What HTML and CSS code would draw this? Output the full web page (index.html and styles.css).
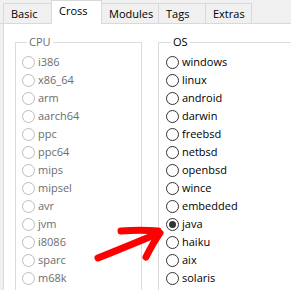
FILE: index.html
```html
<!DOCTYPE html>
<html>
<head>
<meta charset="utf-8">
<link rel="stylesheet" href="styles.css">
</head>
<body>
<div class="tabs">
  <div class="tab t-basic">Basic</div>
  <div class="tab t-cross active">Cross</div>
  <div class="tab t-modules">Modules</div>
  <div class="tab t-tags">Tags</div>
  <div class="tab t-extras">Extras</div>
</div>
<div class="panel">
  <fieldset class="group cpu disabled">
    <legend>CPU</legend>
    <div class="options">
      <div class="opt"><span class="radio"></span><span>i386</span></div>
      <div class="opt"><span class="radio"></span><span>x86_64</span></div>
      <div class="opt"><span class="radio"></span><span>arm</span></div>
      <div class="opt"><span class="radio"></span><span>aarch64</span></div>
      <div class="opt"><span class="radio"></span><span>ppc</span></div>
      <div class="opt"><span class="radio"></span><span>ppc64</span></div>
      <div class="opt"><span class="radio"></span><span>mips</span></div>
      <div class="opt"><span class="radio"></span><span>mipsel</span></div>
      <div class="opt"><span class="radio"></span><span>avr</span></div>
      <div class="opt"><span class="radio"></span><span>jvm</span></div>
      <div class="opt"><span class="radio"></span><span>i8086</span></div>
      <div class="opt"><span class="radio"></span><span>sparc</span></div>
      <div class="opt"><span class="radio"></span><span>m68k</span></div>
    </div>
  </fieldset>
  <fieldset class="group os">
    <legend>OS</legend>
    <div class="options">
      <div class="opt"><span class="radio"></span><span>windows</span></div>
      <div class="opt"><span class="radio"></span><span>linux</span></div>
      <div class="opt"><span class="radio"></span><span>android</span></div>
      <div class="opt"><span class="radio"></span><span>darwin</span></div>
      <div class="opt"><span class="radio"></span><span>freebsd</span></div>
      <div class="opt"><span class="radio"></span><span>netbsd</span></div>
      <div class="opt"><span class="radio"></span><span>openbsd</span></div>
      <div class="opt"><span class="radio"></span><span>wince</span></div>
      <div class="opt"><span class="radio"></span><span>embedded</span></div>
      <div class="opt"><span class="radio checked"></span><span>java</span></div>
      <div class="opt"><span class="radio"></span><span>haiku</span></div>
      <div class="opt"><span class="radio"></span><span>aix</span></div>
      <div class="opt"><span class="radio"></span><span>solaris</span></div>
    </div>
  </fieldset>
</div>
<svg class="arrow" width="291" height="290" viewBox="0 0 291 290">
  <g fill="none" stroke="#ff0000" stroke-width="7" stroke-linecap="round" stroke-linejoin="round">
    <path d="M98 258 C 118 250, 140 241, 159 233"/>
    <path d="M121 231 C 134 230, 147 230, 158 231"/>
    <path d="M146 257 C 150 249, 155 240, 160 233"/>
  </g>
</svg>
</body>
</html>
```
FILE: styles.css
```css
html, body {
  margin: 0;
  padding: 0;
}
body {
  width: 291px;
  height: 290px;
  overflow: hidden;
  position: relative;
  background: #f0f0f0;
  font-family: "Open Sans", sans-serif;
  font-size: 11px;
  line-height: 16px;
  color: #000;
}
.tabs {
  display: flex;
  align-items: flex-end;
  height: 23px;
  border-bottom: 1px solid #d9d9d9;
  padding-left: 3px;
}
.tab {
  box-sizing: border-box;
  height: 20px;
  border: 1px solid #d9d9d9;
  border-bottom: none;
  padding: 2px 0 0 7px;
  margin-left: -1px;
  background: #f0f0f0;
  white-space: nowrap;
}
.t-basic { width: 49px; margin-left: 0; }
.t-cross { width: 51px; }
.t-modules { width: 58px; }
.t-tags { width: 48px; }
.t-extras { width: 47px; }
.tab.active {
  height: 24px;
  margin-bottom: -1px;
  background: #fff;
  position: relative;
  z-index: 1;
}
.panel {
  margin-left: 3px;
  height: 266px;
  background: #fff;
  border-left: 1px solid #d9d9d9;
  display: flex;
  align-items: flex-start;
  gap: 16px;
  padding: 10px 0 0 11px;
}
.group {
  margin: 0;
  border: 1px solid #dcdcdc;
  padding: 0 0 20px 6px;
  min-width: 0;
  flex: none;
}
.group legend {
  margin-left: 5px;
  padding: 0 2px;
  line-height: 16px;
}
.cpu { width: 127px; box-sizing: border-box; }
.os { width: 160px; box-sizing: border-box; padding-left: 7px; }
.options {
  display: flex;
  flex-direction: column;
  padding-top: 3px;
}
.opt {
  display: flex;
  align-items: center;
  height: 18px;
  gap: 3px;
}
.radio {
  box-sizing: border-box;
  width: 13px;
  height: 13px;
  border: 1px solid #333;
  border-radius: 50%;
  background: #fff;
  flex: none;
  display: flex;
  align-items: center;
  justify-content: center;
}
.radio.checked::after {
  content: "";
  width: 7px;
  height: 7px;
  border-radius: 50%;
  background: #333;
}
.disabled, .disabled legend {
  color: #6d6d6d;
}
.disabled .radio {
  border-color: #bcbcbc;
}
.arrow {
  position: absolute;
  left: 0;
  top: 0;
  pointer-events: none;
}
```
